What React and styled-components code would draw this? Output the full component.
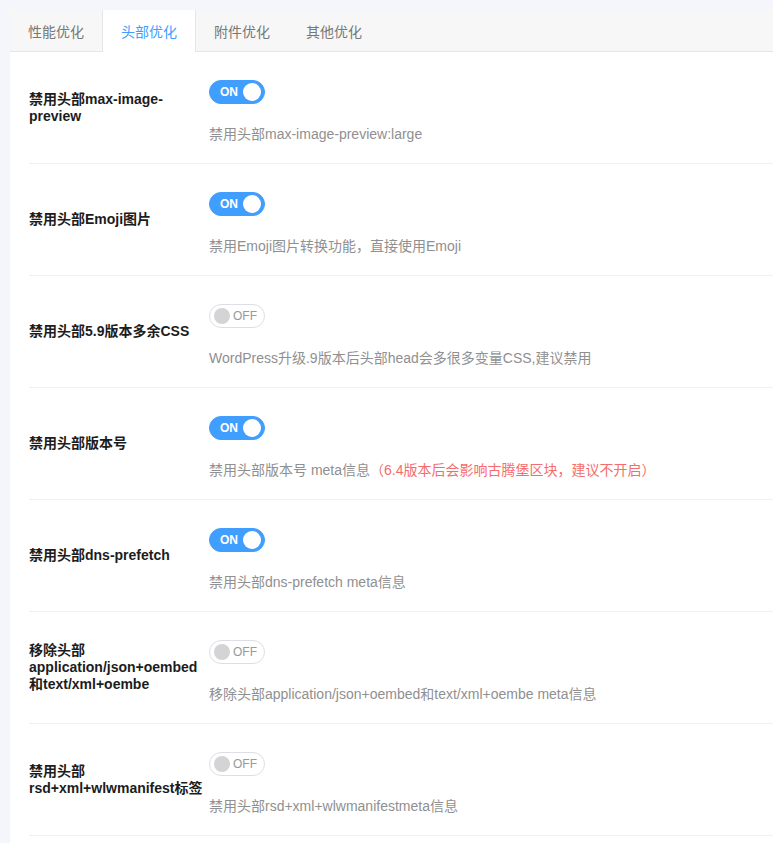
import React from 'react';
import styled, { createGlobalStyle } from 'styled-components';

const GlobalStyle = createGlobalStyle`
  body {
    margin: 0;
    background: #f5f6fb;
    font-family: "Liberation Sans", "Noto Sans CJK SC", sans-serif;
  }
`;

//outer page, panel starts 10px in
const Page = styled.div`
  padding: 10px 0 0 10px;
  overflow: hidden;
`;

const Panel = styled.div`
  background: #fff;
  width: 800px;
  min-height: calc(100vh - 10px);
`;

//tab bar
const TabBar = styled.div`
  display: flex;
  height: 41px;
  background: #f7f7f7;
  border-bottom: 1px solid #e6e6e6;
`;

const Tab = styled.div`
  display: flex;
  align-items: center;
  padding: 0 18px;
  font-size: 14px;
  color: ${(p) => (p.active ? '#409eff' : '#777')};
  background: ${(p) => (p.active ? '#fff' : 'transparent')};
  border-left: ${(p) => (p.active ? '1px solid #e6e6e6' : 'none')};
  border-right: ${(p) => (p.active ? '1px solid #e6e6e6' : 'none')};
  margin-bottom: ${(p) => (p.active ? '-1px' : '0')};
  height: ${(p) => (p.active ? '42px' : '41px')};
`;

const List = styled.div`
  padding-left: 19px;
`;

//one setting row
const Row = styled.div`
  display: flex;
  align-items: center;
  min-height: 111px;
  border-bottom: 1px solid #eef0f5;
`;

const Label = styled.div`
  width: 178px;
  padding-right: 2px;
  font-size: 14px;
  font-weight: bold;
  line-height: 17px;
  color: #1c1c1c;
`;

const Control = styled.div`
  display: flex;
  flex-direction: column;
  align-items: flex-start;
  padding: 28px 0 19px;
`;

const Desc = styled.div`
  margin-top: 21px;
  font-size: 14px;
  line-height: 19px;
  color: #909090;
`;

const Warn = styled.span`
  color: #f56c6c;
`;

//switch toggle
const SwitchBox = styled.div`
  box-sizing: border-box;
  width: 56px;
  height: 24px;
  border-radius: 12px;
  background: ${(p) => (p.on ? '#409eff' : '#fff')};
  border: 1px solid ${(p) => (p.on ? '#409eff' : '#dcdfe6')};
  display: flex;
  align-items: center;
  flex-direction: ${(p) => (p.on ? 'row' : 'row-reverse')};
  justify-content: space-between;
  padding-left: ${(p) => (p.on ? '10px' : '4px')};
  padding-right: ${(p) => (p.on ? '3px' : '7px')};
`;

const SwitchText = styled.span`
  font-size: 12px;
  font-weight: ${(p) => (p.on ? 'bold' : 'normal')};
  color: ${(p) => (p.on ? '#fff' : '#999')};
`;

const Knob = styled.span`
  width: ${(p) => (p.on ? '18px' : '16px')};
  height: ${(p) => (p.on ? '18px' : '16px')};
  border-radius: 50%;
  background: ${(p) => (p.on ? '#fff' : '#d4d4d4')};
`;

const Switch = ({ on }) => (
  <SwitchBox on={on}>
    <SwitchText on={on}>{on ? 'ON' : 'OFF'}</SwitchText>
    <Knob on={on} />
  </SwitchBox>
);

const tabs = ['性能优化', '头部优化', '附件优化', '其他优化'];

const rows = [
  { label: '禁用头部max-image-preview', on: true, desc: '禁用头部max-image-preview:large' },
  { label: '禁用头部Emoji图片', on: true, desc: '禁用Emoji图片转换功能，直接使用Emoji' },
  { label: '禁用头部5.9版本多余CSS', on: false, desc: 'WordPress升级.9版本后头部head会多很多变量CSS,建议禁用' },
  { label: '禁用头部版本号', on: true, desc: '禁用头部版本号 meta信息', warn: '（6.4版本后会影响古腾堡区块，建议不开启）' },
  { label: '禁用头部dns-prefetch', on: true, desc: '禁用头部dns-prefetch meta信息' },
  { label: '移除头部application/json+oembed和text/xml+oembe', on: false, desc: '移除头部application/json+oembed和text/xml+oembe meta信息' },
  { label: '禁用头部rsd+xml+wlwmanifest标签', on: false, desc: '禁用头部rsd+xml+wlwmanifestmeta信息' },
];

const App = () => {
  return (
    <Page>
      <GlobalStyle />
      <Panel>
        <TabBar>
          {tabs.map((t, i) => (
            <Tab key={t} active={i === 1}>{t}</Tab>
          ))}
        </TabBar>
        <List>
          {rows.map((r) => (
            <Row key={r.label}>
              <Label>{r.label}</Label>
              <Control>
                <Switch on={r.on} />
                <Desc>
                  {r.desc}
                  {r.warn ? <Warn>{r.warn}</Warn> : null}
                </Desc>
              </Control>
            </Row>
          ))}
        </List>
      </Panel>
    </Page>
  );
};

export default App;
